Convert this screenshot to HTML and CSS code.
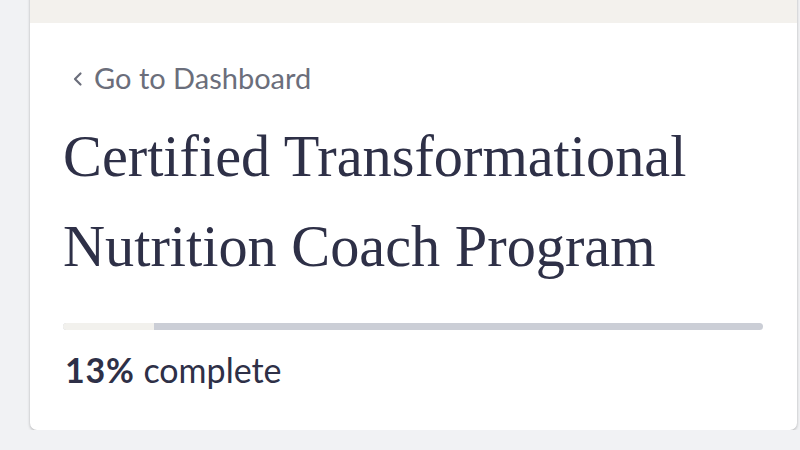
FILE: index.html
```html
<!DOCTYPE html>
<html lang="en">
<head>
    <meta charset="UTF-8">
    <meta name="viewport" content="width=device-width, initial-scale=1.0">
    <title>Course Progress</title>
    <link rel="stylesheet" href="styles.css">
</head>
<body>
    <div class="card">
        <div class="card-top"></div>
        <div class="card-body">
            <a href="#" class="back-link">
                <svg class="chevron" width="12" height="16" viewBox="0 0 12 16"><path d="M9.5 2.5 L4 8 L9.5 13.5" fill="none" stroke="currentColor" stroke-width="2.2" stroke-linecap="round" stroke-linejoin="round"/></svg>
                Go to Dashboard
            </a>
            <h1 class="title">Certified Transformational Nutrition Coach Program</h1>
            <div class="progress">
                <div class="progress-fill" style="width: 13%"></div>
            </div>
            <p class="progress-text"><strong>13%</strong> complete</p>
        </div>
    </div>
</body>
</html>
```

FILE: styles.css
```css
body { margin: 0; background: #f1f2f4; font-family: Lato, "Open Sans", sans-serif; }
.card { margin: -10px 3px 0 30px; height: 440px; background: white; border-radius: 0 0 7px 7px; box-shadow: 0 1px 3px rgba(0,0,0,0.28); overflow: hidden; }
.card-top { height: 33px; background: #f3f1ed; }
.card-body { padding: 37px 34px 0 33px; }
.back-link { display: inline-flex; align-items: center; gap: 11px; color: #6b6e7b; text-decoration: none; font-size: 29px; padding-left: 8px; }
.chevron { margin-top: 2px; }
.title { font-family: "Liberation Serif", serif; font-weight: normal; font-size: 58.3px; line-height: 90px; color: #2e3047; margin: 17px 0 0; }
.progress { height: 7px; background: #cbced6; border-radius: 4px; margin-top: 31px; overflow: hidden; }
.progress-fill { height: 100%; background: #f2f1ed; }
.progress-text { margin: 19px 0 0 2px; font-size: 34px; color: #2e3047; }
.progress-text strong { font-weight: bold; letter-spacing: 0.8px; }
```
